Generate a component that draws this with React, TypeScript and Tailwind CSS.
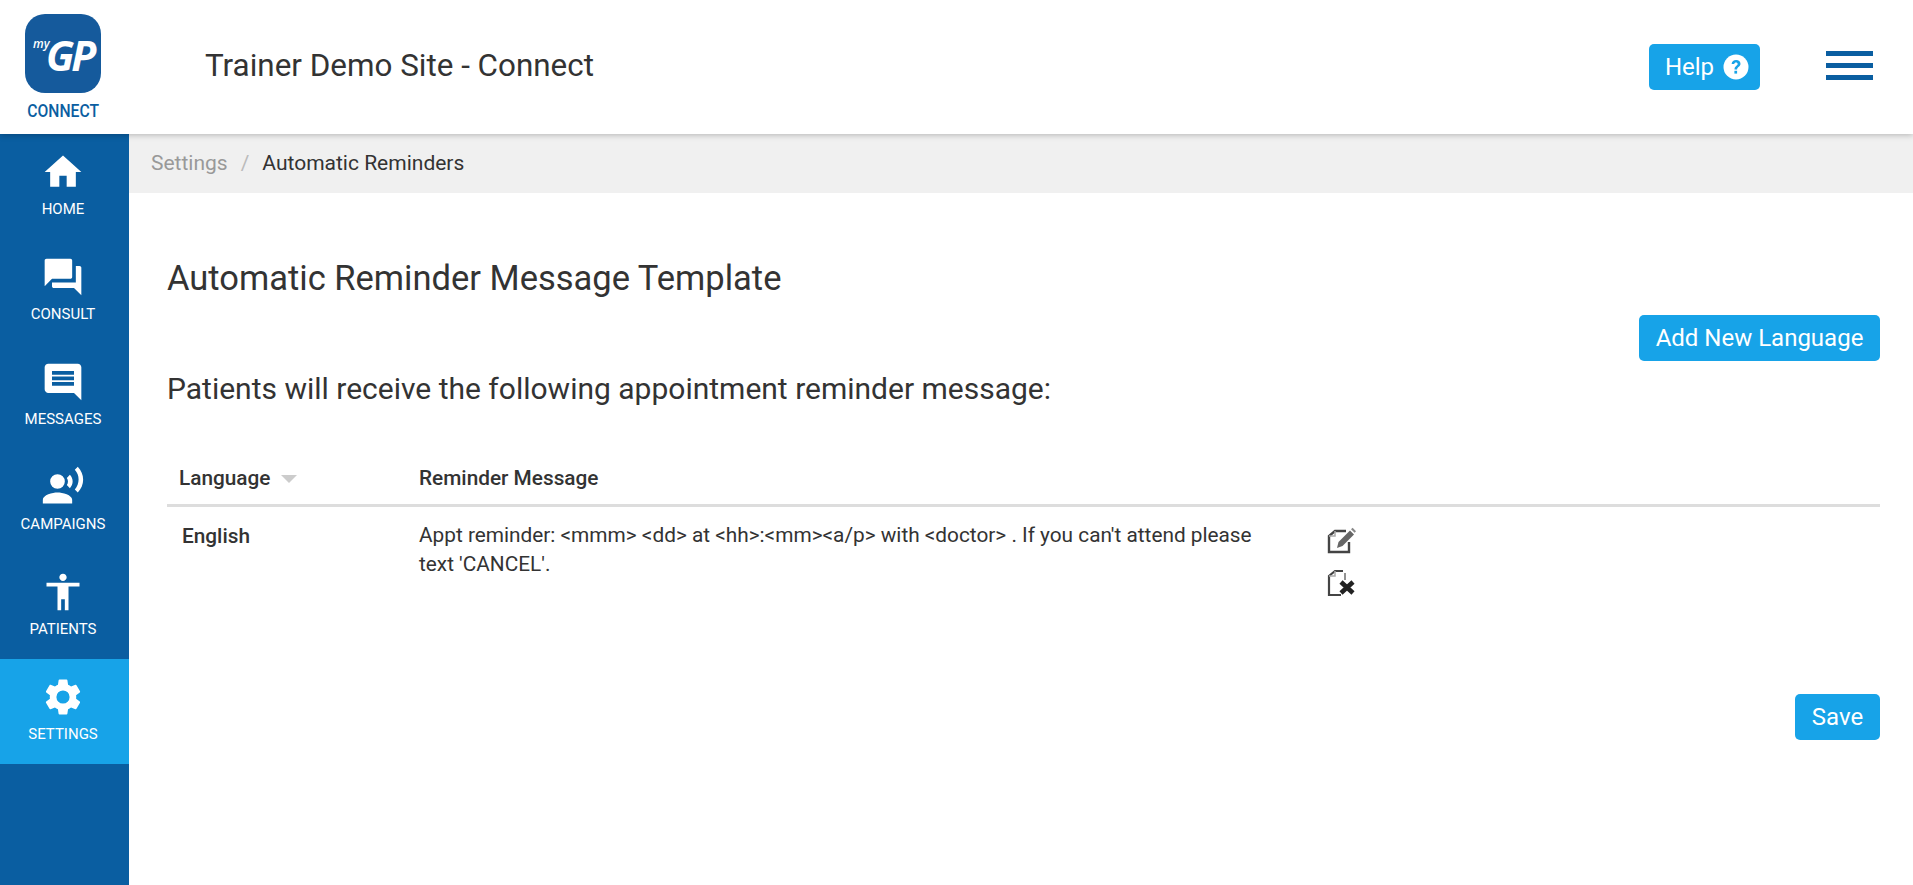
import React from "react";

const navItems = [
  { label: "HOME", path: "M10 20v-6h4v6h5v-8h3L12 3 2 12h3v8z" },
  {
    label: "CONSULT",
    path: "M21 6h-2v9H6v2c0 .55.45 1 1 1h11l4 4V7c0-.55-.45-1-1-1zm-4 6V3c0-.55-.45-1-1-1H3c-.55 0-1 .45-1 1v14l4-4h10c.55 0 1-.45 1-1z",
  },
  {
    label: "MESSAGES",
    path: "M4 2h16c1.1 0 2 .9 2 2v18l-4-4H4c-1.1 0-2-.9-2-2V4c0-1.1.9-2 2-2zm2 12h12v-2H6v2zm0-3h12V9H6v2zm0-3h12V6H6v2z",
  },
  {
    label: "CAMPAIGNS",
    path: "M9 5a4 4 0 1 1 0 8 4 4 0 0 1 0-8zM9 15c-2.67 0-8 1.34-8 4v2h16v-2c0-2.66-5.33-4-8-4zM15.76 5.36l-1.68 1.69c.84 1.18.84 2.71 0 3.89l1.68 1.69c2.02-2.02 2.02-5.07 0-7.27zM20.07 1l-1.63 1.63c2.77 3.02 2.77 7.56 0 10.74L20.07 15c3.9-3.89 3.91-9.95 0-14z",
  },
  {
    label: "PATIENTS",
    path: "M12 2c1.1 0 2 .9 2 2s-.9 2-2 2-2-.9-2-2 .9-2 2-2zm9 7h-6v13h-2v-6h-2v6H9V9H3V7h18v2z",
  },
  {
    label: "SETTINGS",
    path: "M19.14 12.94c.04-.3.06-.61.06-.94 0-.32-.02-.64-.07-.94l2.03-1.58a.49.49 0 0 0 .12-.61l-1.92-3.32a.488.488 0 0 0-.59-.22l-2.39.96c-.5-.38-1.03-.7-1.62-.94l-.36-2.54a.484.484 0 0 0-.48-.41h-3.84c-.24 0-.43.17-.47.41l-.36 2.54c-.59.24-1.13.57-1.62.94l-2.39-.96c-.22-.08-.47 0-.59.22L2.74 8.87c-.12.21-.08.47.12.61l2.03 1.58c-.05.3-.09.63-.09.94s.02.64.07.94l-2.03 1.58a.49.49 0 0 0-.12.61l1.92 3.32c.12.22.37.29.59.22l2.39-.96c.5.38 1.03.7 1.62.94l.36 2.54c.05.24.24.41.48.41h3.84c.24 0 .44-.17.47-.41l.36-2.54c.59-.24 1.13-.56 1.62-.94l2.39.96c.22.08.47 0 .59-.22l1.92-3.32c.12-.22.07-.47-.12-.61l-2.01-1.58zM12 15.6A3.6 3.6 0 1 1 12 8.4a3.6 3.6 0 0 1 0 7.2z",
    active: true,
  },
];

function Logo() {
  return (
    <div className="w-[129px] shrink-0 flex flex-col items-center pt-[14px] pr-[3px]">
      <div className="relative w-[76px] h-[79px] rounded-[20px] bg-[#155a9c] text-white font-['Open_Sans',sans-serif] italic">
        <span className="absolute left-[8px] top-[24px] text-[12px] leading-[12px] font-semibold">my</span>
        <span className="absolute left-[21px] top-[19px] text-[41px] leading-[44px] font-bold tracking-[-3px]">GP</span>
      </div>
      <div className="mt-[7px] text-[18px] leading-[22px] font-medium scale-x-[0.87] text-[#0a5ea1]">CONNECT</div>
    </div>
  );
}

function EditIcon() {
  return (
    <svg width="32" height="28" viewBox="0 0 32 28" fill="none">
      <path d="M20 5H9L3 10v16h20V16" stroke="#444" strokeWidth="2.4" />
      <path d="M9 5v5H3" stroke="#aaa" strokeWidth="1.5" />
      <path d="M11 22l1.5-6L24 4.5l4 4L16.5 20z" fill="#666" />
      <path d="M25 3.2l1.6-1.4 3.4 3.4-1.4 1.6z" fill="#888" />
    </svg>
  );
}

function DeleteIcon() {
  return (
    <svg width="32" height="28" viewBox="0 0 32 28" fill="none">
      <path d="M17 2H9L3 7v19h12" stroke="#444" strokeWidth="2.2" />
      <path d="M9 2v5H3" stroke="#aaa" strokeWidth="1.5" />
      <path d="M19 4v7" stroke="#777" strokeWidth="1.6" />
      <path d="M15 13l12 11M27 13L15 24" stroke="#222" strokeWidth="4.6" />
    </svg>
  );
}

export default function App() {
  return (
    <div className="h-screen overflow-hidden flex flex-col bg-white text-[#333] font-['Roboto',sans-serif]">
      <header className="relative z-10 h-[134px] shrink-0 flex bg-white shadow-[0_1px_6px_rgba(0,0,0,0.25)]">
        <Logo />
        <h1 className="ml-[76px] mt-[44px] text-[31.4px] leading-[44px] font-normal">Trainer Demo Site - Connect</h1>
        <div className="ml-auto flex items-start pt-[44px]">
          <button className="w-[111px] h-[46px] pl-[5px] rounded-[5px] bg-[#17a3e8] text-white text-[24px] flex items-center justify-center gap-[9px]">
            Help
            <svg width="26" height="26" viewBox="0 0 26 26">
              <circle cx="13" cy="13" r="12.5" fill="#fff" />
              <path d="M8.6 10c.2-2.6 2.1-4 4.5-4 2.6 0 4.4 1.5 4.4 3.7 0 3-3.4 3.1-3.4 5.7h-2.6c0-3.6 3.2-3.7 3.2-5.5 0-.9-.7-1.5-1.7-1.5-1.1 0-1.7.7-1.8 1.6z" fill="#17a3e8" />
              <rect x="11.4" y="16.8" width="2.7" height="2.8" fill="#17a3e8" />
            </svg>
          </button>
          <div className="ml-[66px] mr-[40px] mt-[7px] w-[47px] flex flex-col gap-[7px]">
            <div className="h-[5px] bg-[#0a5ea1]" />
            <div className="h-[5px] bg-[#0a5ea1]" />
            <div className="h-[5px] bg-[#0a5ea1]" />
          </div>
        </div>
      </header>

      <div className="flex flex-1 min-h-0">
        <nav className="w-[129px] shrink-0 bg-[#0a5ea1]">
          {navItems.map((item) => (
            <div
              key={item.label}
              className={
                item.active
                  ? "h-[105px] flex flex-col items-center pt-[16px] pr-[3px] text-white bg-[#17a3e8]"
                  : "h-[105px] flex flex-col items-center pt-[16px] pr-[3px] text-white"
              }
            >
              <svg width="44" height="44" viewBox="0 0 24 24" fill="#fff">
                <path fillRule="evenodd" d={item.path} />
              </svg>
              <span className="mt-[5px] text-[15px] leading-[20px]">{item.label}</span>
            </div>
          ))}
        </nav>

        <main className="flex-1 min-w-0">
          <div className="h-[59px] bg-[#f0f0f0] flex items-center pl-[22px] text-[21px]">
            <span className="text-[#999]">Settings</span>
            <span className="mx-[13px] text-[#bbb]">/</span>
            <span>Automatic Reminders</span>
          </div>

          <div className="pl-[38px] pr-[33px]">
            <h2 className="mt-[63px] text-[34.5px] leading-[44px] font-normal">Automatic Reminder Message Template</h2>
            <div className="flex justify-end mt-[15px]">
              <button className="h-[46px] w-[241px] rounded-[5px] bg-[#17a3e8] text-white text-[24px]">Add New Language</button>
            </div>
            <h3 className="mt-[9px] text-[30px] leading-[38px] font-normal">Patients will receive the following appointment reminder message:</h3>

            <div className="mt-[51px] h-[48px] pb-[6px] flex items-center border-b-[3px] border-[#ddd] text-[20.8px] font-medium">
              <div className="w-[252px] pl-[12px] flex items-center gap-[10px]">
                Language
                <span className="w-0 h-0 border-x-[8px] border-x-transparent border-t-[8px] border-t-[#ccc]" />
              </div>
              <div>Reminder Message</div>
            </div>
            <div className="flex pt-[14px]">
              <div className="w-[252px] pl-[15px] text-[20.8px] leading-[30px] font-medium">English</div>
              <div className="w-[907px] pr-[50px] text-[20.8px] leading-[29px]">
                Appt reminder: &lt;mmm&gt; &lt;dd&gt; at &lt;hh&gt;:&lt;mm&gt;&lt;a/p&gt; with &lt;doctor&gt; . If you can't attend please text 'CANCEL'.
              </div>
              <div className="flex flex-col gap-[15px] pt-[5px]">
                <EditIcon />
                <DeleteIcon />
              </div>
            </div>
            <div className="flex justify-end mt-[97px]">
              <button className="h-[46px] w-[85px] rounded-[5px] bg-[#17a3e8] text-white text-[24px]">Save</button>
            </div>
          </div>
        </main>
      </div>
    </div>
  );
}
